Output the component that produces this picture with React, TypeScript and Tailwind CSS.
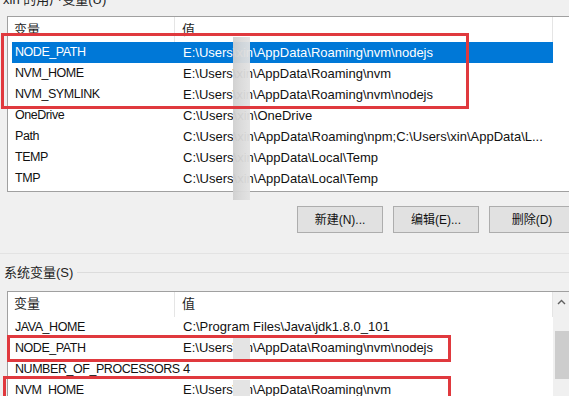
const ui = { fontFamily: '"Segoe UI", "Liberation Sans", "Noto Sans CJK SC", sans-serif' };

const userVars: Array<[string, string]> = [
  ["NODE_PATH", "E:\\Users\\xin\\AppData\\Roaming\\nvm\\nodejs"],
  ["NVM_HOME", "E:\\Users\\xin\\AppData\\Roaming\\nvm"],
  ["NVM_SYMLINK", "E:\\Users\\xin\\AppData\\Roaming\\nvm\\nodejs"],
  ["OneDrive", "C:\\Users\\xin\\OneDrive"],
  ["Path", "C:\\Users\\xin\\AppData\\Roaming\\npm;C:\\Users\\xin\\AppData\\L..."],
  ["TEMP", "C:\\Users\\xin\\AppData\\Local\\Temp"],
  ["TMP", "C:\\Users\\xin\\AppData\\Local\\Temp"],
];

const sysVars: Array<[string, string]> = [
  ["JAVA_HOME", "C:\\Program Files\\Java\\jdk1.8.0_101"],
  ["NODE_PATH", "E:\\Users\\xin\\AppData\\Roaming\\nvm\\nodejs"],
  ["NUMBER_OF_PROCESSORS", "4"],
  ["NVM_HOME", "E:\\Users\\xin\\AppData\\Roaming\\nvm"],
];

function Header() {
  return (
    <div className="flex h-[25px] items-center text-[13px] text-[#1e1e1e]">
      <div className="flex h-full w-[167px] items-center border-r border-[#e5e5e5] pl-[6px]">变量</div>
      <div className="flex h-full w-[378px] items-center border-r border-[#e5e5e5] pl-[7px]">值</div>
    </div>
  );
}

function Row({ name, value, selected }: { name: string; value: string; selected?: boolean }) {
  return (
    <div className="flex h-[21px] items-center text-[13px]">
      <div className={`ml-[4px] flex h-full w-[541px] items-center ${selected ? "bg-[#0078d7] text-white" : "text-[#111]"}`}>
        <div className="w-[163px] shrink-0 whitespace-nowrap pl-[3px] text-[12.5px] tracking-[-0.45px]">{name}</div>
        <div className="whitespace-nowrap pl-[8px]">{value}</div>
      </div>
    </div>
  );
}

function Btn({ label }: { label: string }) {
  return (
    <button className="flex h-[27px] w-[86px] shrink-0 items-center justify-center border border-[#adadad] bg-[#e1e1e1] text-[12px] text-[#111]">
      {label}
    </button>
  );
}

export default function App() {
  return (
    <div className="relative h-[396px] w-[569px] overflow-hidden bg-[#f0f0f0]" style={ui}>
      <div className="h-[16px] overflow-hidden">
        <div className="-mt-[10px] pl-[3px] text-[13px] text-[#222]">xin 的用户变量(U)</div>
      </div>

      {/* user variables list */}
      <div className="ml-[7px] h-[176px] w-[580px] border border-[#a0a0a0] bg-white">
        <Header />
        {userVars.map(([n, v], i) => (
          <Row key={n} name={n} value={v} selected={i === 0} />
        ))}
      </div>

      <div className="mt-[14px] flex gap-[10px] pl-[297px]">
        <Btn label="新建(N)..." />
        <Btn label="编辑(E)..." />
        <Btn label="删除(D)" />
      </div>

      <div className="mt-[20px] h-px bg-[#e3e3e3]" />

      <div className="mt-[9px] flex items-center">
        <span className="pl-[4px] pr-[4px] text-[13px] text-[#222]">系统变量(S)</span>
        <div className="h-px flex-1 bg-[#dcdcdc]" />
      </div>

      {/* system variables list */}
      <div className="ml-[7px] mt-[8px] flex w-[580px] border border-[#a0a0a0] bg-white">
        <div className="w-[545px]">
          <Header />
          {sysVars.map(([n, v]) => (
            <Row key={n} name={n} value={v} />
          ))}
        </div>
        <div className="flex w-[17px] flex-col items-center bg-[#f0f0f0]">
          <svg className="mt-[7px]" width="9" height="6" viewBox="0 0 9 6">
            <path d="M1 5 L4.5 1.5 L8 5" fill="none" stroke="#606060" strokeWidth="1.4" />
          </svg>
          <div className="mt-[26px] h-[48px] w-[14px] bg-[#cdcdcd]" />
        </div>
      </div>

      {/* blurred names */}
      <div className="absolute left-[233px] top-[37px] h-[163px] w-[17px] bg-gradient-to-r from-[#cfcfcf] via-[#dadada] to-[#e2e2e2] opacity-95" />
      <div className="absolute left-[233px] top-[338px] h-[22px] w-[17px] bg-[#e4e4e4]" />
      <div className="absolute left-[233px] top-[380px] h-[16px] w-[17px] bg-[#e4e4e4]" />

      {/* red highlight boxes */}
      <div className="absolute left-[1px] top-[33px] h-[76px] w-[468px] border-[3px] border-[#e0393e]" />
      <div className="absolute left-[7px] top-[335px] h-[27px] w-[444px] border-[3px] border-[#e0393e]" />
      <div className="absolute left-[3px] top-[376px] h-[30px] w-[448px] border-[3px] border-[#e0393e]" />
    </div>
  );
}
